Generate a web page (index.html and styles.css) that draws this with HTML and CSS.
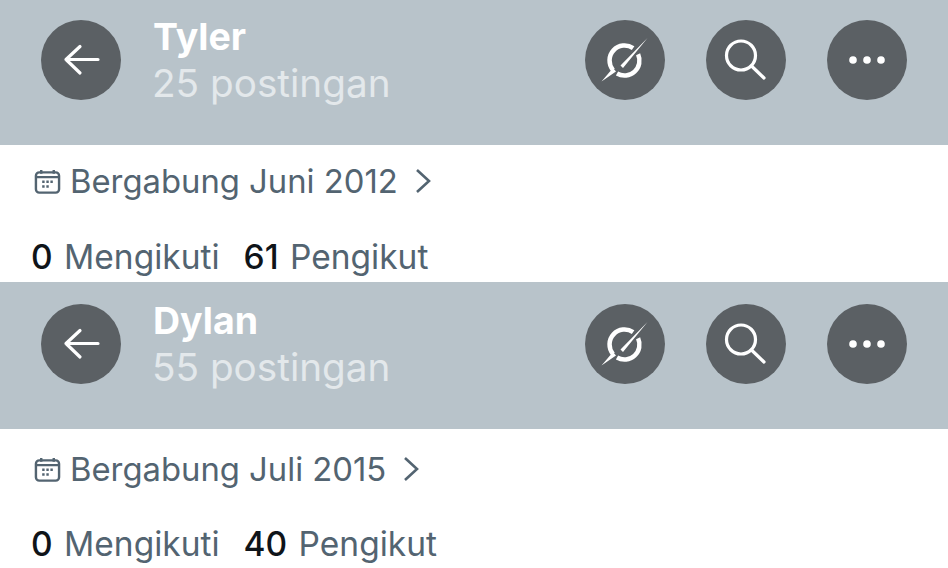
FILE: index.html
```html
<!DOCTYPE html>
<html lang="id">
<head>
<meta charset="utf-8">
<title>Profil</title>
<link rel="stylesheet" href="styles.css">
</head>
<body>
<section class="profile profile-first">
  <header class="bar">
    <button class="btn" aria-label="Kembali"><svg viewBox="0 0 80 80" class="ico"><path class="line" d="M25 39.500H57M39 26.500 25 39.500 39 53"/></svg></button>
    <div class="titles">
      <div class="name">Tyler</div>
      <div class="count">25 postingan</div>
    </div>
    <div class="actions">
      <button class="btn" aria-label="Grok"><svg viewBox="0 0 80 80" class="ico"><path class="ring" d="M48.100 28.200A15 15 0 0 0 28 50.100M32 53.500A15 15 0 0 0 53.100 34.200"/><path class="fill" d="M62.500 18 38 48 35.500 45.500ZM16.500 61.500 28 48 31 51.500Z"/></svg></button>
      <button class="btn" aria-label="Cari"><svg viewBox="0 0 80 80" class="ico"><circle class="line" cx="35" cy="35.500" r="14.500"/><path class="line" d="M45.500 46 58 58"/></svg></button>
      <button class="btn" aria-label="Lainnya"><svg viewBox="0 0 80 80" class="ico"><circle class="fill" cx="26" cy="40" r="3.800"/><circle class="fill" cx="40" cy="40" r="3.800"/><circle class="fill" cx="54" cy="40" r="3.800"/></svg></button>
    </div>
  </header>
  <div class="info">
    <div class="joined">
      <svg viewBox="0 0 28 28" class="cal"><rect x="2" y="4.500" width="24" height="21" rx="3.500"/><path d="M7.500 2V6M20.500 2V6M2 9.500H26"/><path class="pips" d="M8.500 13h2.500v2.500H8.500zM12.800 13h2.500v2.500h-2.500zM17 13h2.500v2.500H17zM8.500 18h2.500v2.500H8.500zM12.800 18h2.500v2.500h-2.500z"/></svg>
      <span>Bergabung Juni 2012</span>
      <svg viewBox="0 0 16 26" class="chev"><path d="M2 2 14 13 2 24"/></svg>
    </div>
    <div class="stats"><b>0</b> <span class="lbl">Mengikuti</span><b class="second">61</b> <span class="lbl">Pengikut</span></div>
  </div>
</section>
<section class="profile profile-second">
  <header class="bar">
    <button class="btn" aria-label="Kembali"><svg viewBox="0 0 80 80" class="ico"><path class="line" d="M25 39.500H57M39 26.500 25 39.500 39 53"/></svg></button>
    <div class="titles">
      <div class="name">Dylan</div>
      <div class="count">55 postingan</div>
    </div>
    <div class="actions">
      <button class="btn" aria-label="Grok"><svg viewBox="0 0 80 80" class="ico"><path class="ring" d="M48.100 28.200A15 15 0 0 0 28 50.100M32 53.500A15 15 0 0 0 53.100 34.200"/><path class="fill" d="M62.500 18 38 48 35.500 45.500ZM16.500 61.500 28 48 31 51.500Z"/></svg></button>
      <button class="btn" aria-label="Cari"><svg viewBox="0 0 80 80" class="ico"><circle class="line" cx="35" cy="35.500" r="14.500"/><path class="line" d="M45.500 46 58 58"/></svg></button>
      <button class="btn" aria-label="Lainnya"><svg viewBox="0 0 80 80" class="ico"><circle class="fill" cx="26" cy="40" r="3.800"/><circle class="fill" cx="40" cy="40" r="3.800"/><circle class="fill" cx="54" cy="40" r="3.800"/></svg></button>
    </div>
  </header>
  <div class="info">
    <div class="joined">
      <svg viewBox="0 0 28 28" class="cal"><rect x="2" y="4.500" width="24" height="21" rx="3.500"/><path d="M7.500 2V6M20.500 2V6M2 9.500H26"/><path class="pips" d="M8.500 13h2.500v2.500H8.500zM12.800 13h2.500v2.500h-2.500zM17 13h2.500v2.500H17zM8.500 18h2.500v2.500H8.500zM12.800 18h2.500v2.500h-2.500z"/></svg>
      <span>Bergabung Juli 2015</span>
      <svg viewBox="0 0 16 26" class="chev"><path d="M2 2 14 13 2 24"/></svg>
    </div>
    <div class="stats"><b>0</b> <span class="lbl">Mengikuti</span><b class="second">40</b> <span class="lbl">Pengikut</span></div>
  </div>
</section>
</body>
</html>
```
FILE: styles.css
```css
* { box-sizing: border-box; }
html, body { margin: 0; padding: 0; }
body {
  width: 948px;
  height: 568px;
  overflow: hidden;
  background: #fff;
  font-family: "Inter", "Liberation Sans", sans-serif;
}
.profile-first { height: 282px; }
.profile-second { height: 286px; }
.bar {
  height: 145px;
  background: #b8c3ca;
  display: flex;
  align-items: flex-start;
  padding: 20px 41px 0;
}
.profile-second .bar { height: 147px; padding-top: 22px; }
.btn {
  width: 80px;
  height: 80px;
  border: 0;
  padding: 0;
  border-radius: 50%;
  background: #5b6064;
  display: flex;
  flex: none;
}
.ico { width: 80px; height: 80px; }
.line { fill: none; stroke: #fff; stroke-width: 3.200; stroke-linecap: round; stroke-linejoin: round; }
.ring { fill: none; stroke: #fff; stroke-width: 4.500; }
.fill { fill: #fff; }
.titles { margin-left: 32px; margin-top: -4px; flex: 1; }
.name { color: #fff; font-weight: 700; font-size: 37.500px; line-height: 42px; }
.count { color: #e3e8eb; font-size: 38.700px; line-height: 50px; margin-left: -1px; }
.actions { display: flex; gap: 41px; }
.info { padding: 16px 31px 0; color: #536471; }
.profile-second .info { padding-top: 20px; }
.joined { display: flex; align-items: center; gap: 9px; font-size: 32.800px; line-height: 40px; }
.cal { width: 27px; height: 27px; margin-left: 3px; fill: none; stroke: #536471; stroke-width: 2.500; }
.pips { fill: #536471; stroke: none; }
.chev { width: 16px; height: 26px; margin-left: 8px; fill: none; stroke: #536471; stroke-width: 2.600; }
.stats { margin-top: 36px; font-size: 33.500px; line-height: 40px; white-space: nowrap; }
.profile-second .stats { margin-top: 35px; }
.stats b { color: #0f1419; font-weight: 500; margin-right: 2px; }
.stats .second { margin-left: 24px; }
```
